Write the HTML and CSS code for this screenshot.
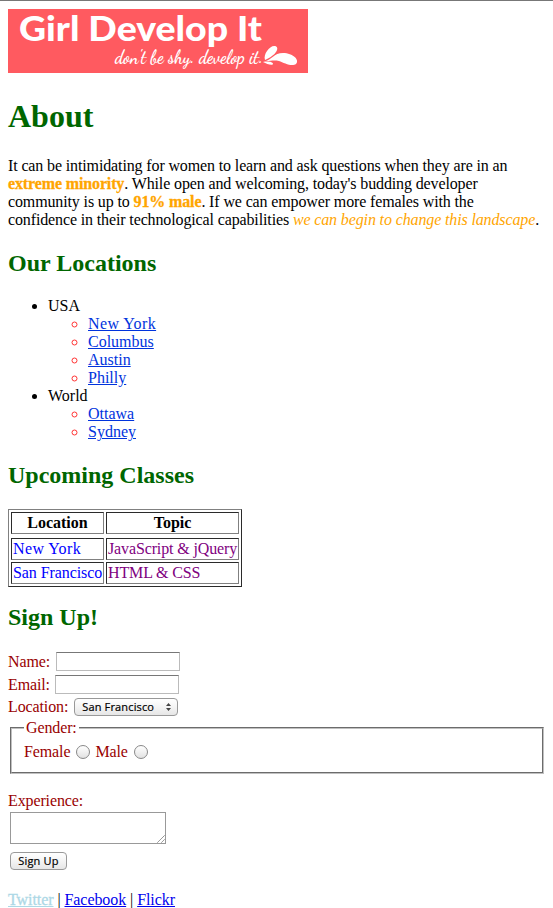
FILE: index.html
```
<!DOCTYPE html>
<html lang="en">
<head>
<meta charset="utf-8">
<title>Girl Develop It</title>
<link rel="stylesheet" href="styles.css">
</head>
<body>
<svg class="logo" width="300" height="64" viewBox="0 0 300 64" role="img" aria-label="Girl Develop It">
  <rect width="300" height="64" fill="#ff5a60"/>
  <text class="brand" x="11" y="31.5" textLength="243" lengthAdjust="spacingAndGlyphs">Girl Develop It</text>
  <text class="tagline" x="107" y="54" textLength="148" lengthAdjust="spacingAndGlyphs">don't be shy. develop it.</text>
  <path fill="#fff" d="M257 51C255 45 262 36 267 37C272 38 269 46 257 51ZM258 52C263 51 266 44 275 44C285 44 292 51 288 55C284 58 276 54 271 52C266 51 263 52 258 52ZM255 53C260 52 265 53 265 55C264 57 259 55 255 53Z"/>
</svg>
<h1>About</h1>
<p class="intro">It can be intimidating for women to learn and ask questions when they are in an<br><strong>extreme minority</strong>. While open and welcoming, today's budding developer<br>community is up to <strong>91% male</strong>. If we can empower more females with the<br>confidence in their technological capabilities <em>we can begin to change this landscape</em>.</p>
<h2>Our Locations</h2>
<ul class="places">
  <li>USA
    <ul>
      <li><a class="ny" href="#">New York</a></li>
      <li><a href="#">Columbus</a></li>
      <li><a href="#">Austin</a></li>
      <li><a href="#">Philly</a></li>
    </ul>
  </li>
  <li>World
    <ul>
      <li><a href="#">Ottawa</a></li>
      <li><a href="#">Sydney</a></li>
    </ul>
  </li>
</ul>
<h2>Upcoming Classes</h2>
<table>
  <thead><tr><th>Location</th><th>Topic</th></tr></thead>
  <tbody>
    <tr><td class="city"><span class="ny">New York</span></td><td class="topic">JavaScript &amp; jQuery</td></tr>
    <tr><td class="city">San Francisco</td><td class="topic">HTML &amp; CSS</td></tr>
  </tbody>
</table>
<h2 class="signup-title">Sign Up!</h2>
<form>
  <div class="row"><label for="name">Name:</label><input class="field" id="name" type="text"></div>
  <div class="row email"><label for="email">Email:</label><input class="field" id="email" type="text"></div>
  <div class="row place"><label>Location:</label><button class="select" type="button"><span>San Francisco</span><svg width="5" height="8" viewBox="0 0 5 8"><path fill="#444" d="M2.5 0L5 3H0ZM2.5 8L0 5H5Z"/></svg></button></div>
  <fieldset>
    <legend>Gender:</legend>
    <div class="choices"><label for="f">Female</label><input id="f" type="radio" name="g"><label for="m">Male</label><input id="m" type="radio" name="g"></div>
  </fieldset>
  <label class="exp" for="exp">Experience:</label>
  <div class="area"><textarea id="exp"></textarea><svg class="grip" width="8" height="8" viewBox="0 0 8 8"><path stroke="#666" stroke-width="1" stroke-dasharray="1.2 .3" d="M0.5 7.5L7.5 .5M4.5 7.5L7.5 4.5"/></svg></div>
  <button class="submit" type="button">Sign Up</button>
</form>
<footer><a class="twitter" href="#">Twitter</a> | <a href="#">Facebook</a> | <a href="#">Flickr</a></footer>
</body>
</html>
```
FILE: styles.css
```
* { box-sizing: border-box; }
html { background: #fff; overflow: hidden; }
body {
  margin: 0;
  padding: 8px 8px 0;
  height: 908px;
  border-top: 1px solid #777;
  font: 16px/18px "Liberation Serif", "Times New Roman", serif;
  color: #000;
}
.logo { display: block; }
.brand { font: 900 35px Lato, sans-serif; fill: #fff; }
.tagline { font: 700 19px "Dancing Script", "Pacifico", cursive; fill: #fff; }
h1, h2 { color: #060; font-weight: bold; }
h1 { margin: 24px 0 22px; font-size: 32px; line-height: 38px; }
h2 { margin: 20px 0; font-size: 24px; line-height: 28px; }
p { margin: 0; }
.intro { white-space: nowrap; letter-spacing: -.13px; }
strong, em { color: orange; }
strong { -webkit-text-stroke: .3px orange; }
ul { margin: 0; padding-left: 40px; }
.places > li { list-style: disc; }
.places ul li { list-style: circle; }
.places ul li::marker { color: #f33; }
.places a { color: #03d; }
.places .ny, .city .ny { letter-spacing: .4px; }
table {
  border: 1px solid;
  border-color: #808080 #2b2b2b #2b2b2b #808080;
  border-collapse: separate;
  border-spacing: 2px;
  table-layout: fixed;
  width: 234px;
}
th, td {
  padding: 1px;
  border: 1px solid;
  border-color: #2b2b2b #808080 #808080 #2b2b2b;
  text-align: left;
  line-height: 18px;
  white-space: nowrap;
}
th { text-align: center; }
th:first-child { width: 93px; }
thead::after { content: ""; display: block; height: 0; }
.city { color: #00f; letter-spacing: -.08px; }
.topic { color: purple; letter-spacing: -.13px; }
.signup-title { margin: 16px 0 19px; }
form { color: #900; letter-spacing: -.12px; }
.row { display: flex; align-items: center; height: 23px; }
.row label { margin-right: 6px; }
.field {
  width: 124px;
  height: 19px;
  padding: 1px;
  border: 1px solid #bbb;
  border-top: 1px solid #777;
  background: #fff;
}
.email label { margin-right: 5px; }
.place { height: 22px; }
.select, .submit {
  border: 1px solid #999;
  border-radius: 4px;
  background: linear-gradient(#fff, #f4f4f4 50%, #e6e6e6);
  font: 11px/14px "Open Sans", sans-serif;
  color: #000;
  -webkit-text-stroke: .2px #000;
}
.place label { margin-right: 6px; }
.select {
  display: flex;
  align-items: center;
  justify-content: space-between;
  width: 104px;
  height: 18px;
  padding: 0 6px 0 7px;
  letter-spacing: .15px;
}
.submit { letter-spacing: .2px; }
fieldset {
  margin: 1px 0 0 2px;
  width: 534px;
  height: 55px;
  padding: 4px 12px;
  border: 2px groove #c0c0c0;
}
legend { padding: 0 2px; }
.choices { display: flex; align-items: center; height: 22px; }
.choices label { margin-right: 6px; }
.choices input {
  appearance: none;
  width: 14px;
  height: 14px;
  margin: 0 5px 0 0;
  border: 1px solid #888;
  border-radius: 50%;
  background: linear-gradient(#fff, #e2e2e2);
}
.exp { display: block; margin-top: 18px; }
.area { position: relative; width: 156px; height: 32px; margin: 2px 0 8px 2px; }
textarea {
  display: block;
  width: 156px;
  height: 32px;
  border: 1px solid #999;
  resize: none;
  background: #fff;
}
.grip { position: absolute; right: 1px; bottom: 1px; }
.submit { display: block; width: 57px; height: 18px; margin-left: 2px; padding: 0; }
footer { margin-top: 21px; letter-spacing: -.07px; }
footer a { color: #00e; }
footer .twitter { color: lightblue; -webkit-text-stroke: .3px lightblue; }
```
